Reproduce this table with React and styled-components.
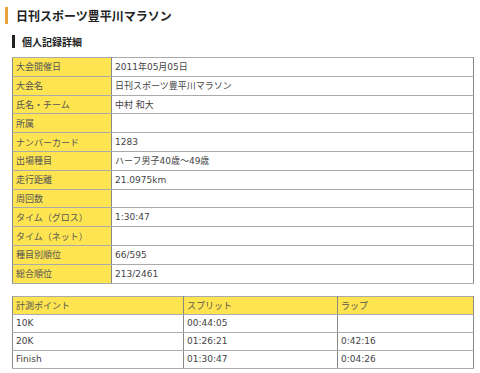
import React from 'react'
import styled, { createGlobalStyle } from 'styled-components'

const GlobalStyle = createGlobalStyle`
  html, body { margin: 0; padding: 0; background: #fff; }
  body {
    font-family: "DejaVu Sans", "Noto Sans CJK JP", sans-serif;
    color: #333;
  }
`

const Page = styled.div`
  width: 480px;
  padding: 7px 6px 0 5px;
  box-sizing: border-box;
`

const Title = styled.h1`
  margin: 0;
  padding-left: 8px;
  border-left: 3px solid #e8a23a;
  font-size: 12px;
  line-height: 17px;
  font-weight: bold;
  font-family: "Noto Sans CJK JP", sans-serif;
  color: #222;
`

const SubTitle = styled.h2`
  margin: 11px 0 0 7px;
  padding-left: 7px;
  border-left: 3px solid #222;
  font-size: 10px;
  line-height: 13px;
  font-weight: bold;
  font-family: "Noto Sans CJK JP", sans-serif;
  color: #222;
`

const Table = styled.table`
  margin: ${p => p.$top}px 0 0 7px;
  width: 462px;
  border-collapse: collapse;
  border: 1px solid #777;
  font-size: 9px;
`

const Cell = styled.td`
  height: ${p => p.$h}px;
  padding: 0 0 0 3px;
  border: 1px solid #aaa;
  border-left-color: #888;
  border-right-color: #888;
  background: ${p => (p.$head ? '#fde450' : '#fff')};
  color: ${p => (p.$head ? '#555' : '#444')};
  width: ${p => p.$w || 'auto'};
  white-space: nowrap;
`

const records = [
  ['大会開催日', '2011年05月05日'],
  ['大会名', '日刊スポーツ豊平川マラソン'],
  ['氏名・チーム', '中村 和大'],
  ['所属', ''],
  ['ナンバーカード', '1283'],
  ['出場種目', 'ハーフ男子40歳〜49歳'],
  ['走行距離', '21.0975km'],
  ['周回数', ''],
  ['タイム（グロス）', '1:30:47'],
  ['タイム（ネット）', ''],
  ['種目別順位', '66/595'],
  ['総合順位', '213/2461'],
]

const splits = [
  ['10K', '00:44:05', ''],
  ['20K', '01:26:21', '0:42:16'],
  ['Finish', '01:30:47', '0:04:26'],
]

export default function App() {
  return (
    <>
      <GlobalStyle />
      <Page>
        <Title>日刊スポーツ豊平川マラソン</Title>
        <SubTitle>個人記録詳細</SubTitle>
        <Table $top={9}>
          <tbody>
            {records.map(([k, v]) => (
              <tr key={k}>
                <Cell $head $h={17.8} $w="95px">{k}</Cell>
                <Cell $h={17.8}>{v}</Cell>
              </tr>
            ))}
          </tbody>
        </Table>
        <Table $top={12}>
          <tbody>
            <tr>
              <Cell $head $h={17} $w="167px">計測ポイント</Cell>
              <Cell $head $h={17} $w="150px">スプリット</Cell>
              <Cell $head $h={17}>ラップ</Cell>
            </tr>
            {splits.map(([p, s, l]) => (
              <tr key={p}>
                <Cell $h={17}>{p}</Cell>
                <Cell $h={17}>{s}</Cell>
                <Cell $h={17}>{l}</Cell>
              </tr>
            ))}
          </tbody>
        </Table>
      </Page>
    </>
  )
}
